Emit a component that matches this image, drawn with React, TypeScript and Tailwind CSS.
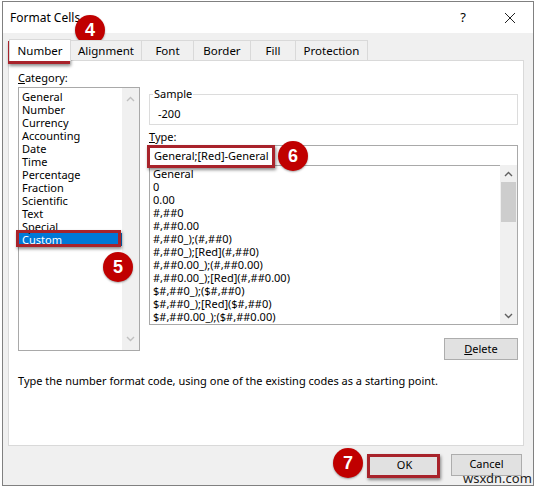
import React from "react";

const categories = [
  "General",
  "Number",
  "Currency",
  "Accounting",
  "Date",
  "Time",
  "Percentage",
  "Fraction",
  "Scientific",
  "Text",
  "Special",
  "Custom",
];

const formats = [
  "General",
  "0",
  "0.00",
  "#,##0",
  "#,##0.00",
  "#,##0_);(#,##0)",
  "#,##0_);[Red](#,##0)",
  "#,##0.00_);(#,##0.00)",
  "#,##0.00_);[Red](#,##0.00)",
  "$#,##0_);($#,##0)",
  "$#,##0_);[Red]($#,##0)",
  "$#,##0.00_);($#,##0.00)",
];

const tabs = ["Alignment", "Font", "Border", "Fill", "Protection"];
const tabWidths = ["w-[71px]", "w-[52px]", "w-[57px]", "w-[45px]", "w-[72px]"];

function Chevron({ up, color }: { up?: boolean; color: string }) {
  return (
    <svg width="9" height="6" viewBox="0 0 9 6">
      <path
        d={up ? "M1 5 L4.5 1.5 L8 5" : "M1 1 L4.5 4.5 L8 1"}
        fill="none"
        stroke={color}
        strokeWidth="1.4"
      />
    </svg>
  );
}

function Badge({ n, className }: { n: string; className: string }) {
  return (
    <div
      className={`absolute w-[30px] h-[30px] rounded-full bg-[#c00000] text-white flex items-center justify-center text-[18px] font-bold shadow-[0_1px_2px_rgba(0,0,0,0.35)] ${className}`}
      style={{ fontFamily: "'Liberation Sans', Arial, sans-serif" }}
    >
      {n}
    </div>
  );
}

function RedBox({ className }: { className: string }) {
  return (
    <div
      className={`absolute border-[3px] border-[#a8232b] shadow-[1px_2px_3px_rgba(0,0,0,0.45)] pointer-events-none ${className}`}
    />
  );
}

export default function App() {
  return (
    <div
      className="relative w-[535px] h-[487px] bg-white text-[11px] text-black overflow-hidden"
      style={{ fontFamily: "'Noto Sans', 'Open Sans', sans-serif" }}
    >
      <div className="absolute inset-0 top-[1px] bottom-[1px] left-[2px] right-[1px] border border-[#808080] flex flex-col bg-[#f0f0f0]">
        {/* title bar */}
        <div className="h-[31px] bg-white flex items-center pl-[7px] shrink-0">
          <span className="text-[12px] leading-none">Format Cells</span>
          <div className="ml-auto flex items-center">
            <span className="text-[13px] mr-[38px]">?</span>
            <svg width="12" height="12" viewBox="0 0 12 12" className="mr-[17px]">
              <path d="M1 1 L11 11 M11 1 L1 11" stroke="#222" strokeWidth="1" />
            </svg>
          </div>
        </div>

        {/* body */}
        <div className="flex-1 flex flex-col px-[5px] pt-[8px]">
          {/* tabs */}
          <div className="flex h-[20px] items-end pl-[1px] relative z-10 text-[11.5px]">
            <div className="w-[62px] h-[22px] bg-white border border-[#d9d9d9] border-b-0 flex items-center justify-center">
              Number
            </div>
            {tabs.map((t, i) => (
              <div
                key={t}
                className={`${tabWidths[i]} h-[20px] bg-[#f0f0f0] border border-[#d9d9d9] border-b-0 border-l-0 flex items-center justify-center mb-[1px]`}
              >
                {t}
              </div>
            ))}
          </div>

          {/* panel */}
          <div className="-mt-[1px] w-[516px] h-[386px] bg-white border border-[#d9d9d9] pl-[9px] pt-[8px]">
            <div className="flex gap-[9px]">
              {/* left column */}
              <div className="w-[122px] flex flex-col">
                <div className="h-[17px] leading-[17px]">
                  <span className="underline">C</span>ategory:
                </div>
                <div className="mt-[1px] h-[264px] border border-[#a9a9a9] flex">
                  <div className="flex-1 pt-[2px]">
                    {categories.map((c) => (
                      <div
                        key={c}
                        className={`h-[13px] leading-[13px] pl-[3px] ${
                          c === "Custom" ? "bg-[#0078d7] text-white" : ""
                        }`}
                      >
                        {c}
                      </div>
                    ))}
                  </div>
                  <div className="w-[17px] bg-[#f0f0f0] flex flex-col items-center justify-between py-[8px]">
                    <Chevron up color="#c0c0c0" />
                    <Chevron color="#c0c0c0" />
                  </div>
                </div>
              </div>

              {/* right column */}
              <div className="w-[369px] flex flex-col">
                {/* sample */}
                <div className="relative mt-[25px] h-[31px] border border-[#dcdcdc]">
                  <span className="absolute -top-[9px] left-[3px] bg-white px-[1px] leading-[16px]">
                    Sample
                  </span>
                  <div className="pl-[8px] pt-[12px] leading-[14px]">-200</div>
                </div>
                <div className="mt-[5px] h-[14px] leading-[14px]">
                  <span className="underline">T</span>ype:
                </div>
                <div className="mt-[1px] h-[21px] border border-[#a9a9a9] pl-[4px] leading-[19px]">
                  General;[Red]-General
                </div>
                <div className="-mt-[1px] h-[160px] border border-[#a9a9a9] border-t-0 flex overflow-hidden">
                  <div className="flex-1 pl-[3px] pt-[2px]">
                    {formats.map((f) => (
                      <div key={f} className="h-[13px] leading-[13px] whitespace-nowrap">
                        {f}
                      </div>
                    ))}
                  </div>
                  <div className="w-[17px] bg-[#f0f0f0] flex flex-col items-center">
                    <div className="h-[17px] flex items-center justify-center">
                      <Chevron up color="#606060" />
                    </div>
                    <div className="w-[15px] h-[40px] bg-[#cdcdcd]" />
                    <div className="flex-1" />
                    <div className="h-[17px] flex items-center justify-center">
                      <Chevron color="#606060" />
                    </div>
                  </div>
                </div>
                <div className="flex justify-end mt-[13px]">
                  <div className="w-[74px] h-[22px] bg-[#e1e1e1] border border-[#adadad] flex items-center justify-center">
                    <span>
                      <span className="underline">D</span>elete
                    </span>
                  </div>
                </div>
              </div>
            </div>
            <div className="mt-[13px] leading-[16px]">
              Type the number format code, using one of the existing codes as a starting point.
            </div>
          </div>

          {/* buttons */}
          <div className="flex justify-end gap-[11px] mt-[8px] pr-[6px]">
            <div className="w-[71px] h-[22px] bg-[#e1e1e1] border border-[#adadad] flex items-center justify-center">
              OK
            </div>
            <div className="w-[71px] h-[22px] bg-[#e1e1e1] border border-[#adadad] flex items-start justify-center leading-none pt-[3px]">
              Cancel
            </div>
          </div>
        </div>
      </div>

      {/* annotations */}
      <RedBox className="left-[8px] top-[41px] w-[62px] h-[23px]" />
      <RedBox className="left-[16px] top-[230px] w-[105px] h-[17px]" />
      <RedBox className="left-[147px] top-[145px] w-[128px] h-[23px]" />
      <RedBox className="left-[367px] top-[454px] w-[73px] h-[24px]" />
      <Badge n="4" className="left-[75px] top-[15px]" />
      <Badge n="5" className="left-[103px] top-[252px]" />
      <Badge n="6" className="left-[278px] top-[141px]" />
      <Badge n="7" className="left-[333px] top-[448px]" />
      <div className="absolute left-[463px] top-[472px] text-[13px] leading-none text-[#222]">
        wsxdn.com
      </div>
    </div>
  );
}
